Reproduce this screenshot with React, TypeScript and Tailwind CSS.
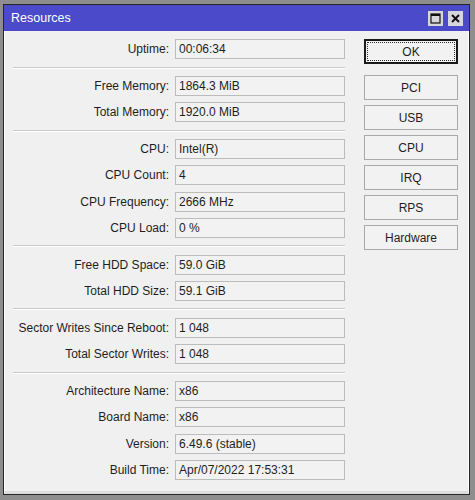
const groups: [string, string][][] = [
  [["Uptime", "00:06:34"]],
  [
    ["Free Memory", "1864.3 MiB"],
    ["Total Memory", "1920.0 MiB"],
  ],
  [
    ["CPU", "Intel(R)"],
    ["CPU Count", "4"],
    ["CPU Frequency", "2666 MHz"],
    ["CPU Load", "0 %"],
  ],
  [
    ["Free HDD Space", "59.0 GiB"],
    ["Total HDD Size", "59.1 GiB"],
  ],
  [
    ["Sector Writes Since Reboot", "1 048"],
    ["Total Sector Writes", "1 048"],
  ],
  [
    ["Architecture Name", "x86"],
    ["Board Name", "x86"],
    ["Version", "6.49.6 (stable)"],
    ["Build Time", "Apr/07/2022 17:53:31"],
  ],
];

const buttons = ["PCI", "USB", "CPU", "IRQ", "RPS", "Hardware"];

function Row({ label, value }: { label: string; value: string }) {
  return (
    <div className="flex items-center h-[26.3px]">
      <div className="w-[156px] text-right whitespace-nowrap">{label}:</div>
      <div className="ml-[6px] w-[170px] h-[20px] border border-[#bcbcbc] bg-[#f2f2f2] px-[3px] flex items-center whitespace-nowrap">
        {value}
      </div>
    </div>
  );
}

export default function App() {
  return (
    <div
      className="w-[475px] h-[500px] bg-[#8e8e8e] pl-[3px] pt-[4px] text-[12px] text-[#1e1e1e]"
      style={{ fontFamily: '"Liberation Sans", Arial, sans-serif' }}
    >
      <div className="w-[467px] h-[491px] border border-[#262626] bg-[#f0f0f0] flex flex-col">
        {/* Title bar */}
        <div className="h-[26px] bg-[#4a4acb] flex items-center pl-[7px] pr-[6px]">
          <span className="text-white text-[12.5px]">Resources</span>
          <div className="ml-auto flex gap-[5px]">
            <div className="w-[15px] h-[15px] bg-[#d6d6dc] flex items-center justify-center">
              <svg width="11" height="11" viewBox="0 0 11 11">
                <rect x="1" y="1" width="9" height="9" fill="none" stroke="#111" strokeWidth="1.2" />
                <rect x="1" y="1" width="9" height="2" fill="#111" />
              </svg>
            </div>
            <div className="w-[15px] h-[15px] bg-[#d6d6dc] flex items-center justify-center">
              <svg width="11" height="11" viewBox="0 0 11 11">
                <path d="M2 2 L9 9 M9 2 L2 9" stroke="#111" strokeWidth="2" />
              </svg>
            </div>
          </div>
        </div>

        {/* Body */}
        <div className="flex-1 flex border-b-[3px] border-[#dcdcdc] border-l border-r border-l-white border-r-white">
          <div className="pl-[8px] pt-[5px]">
            {groups.map((g, i) => (
              <div key={i}>
                {i > 0 && (
                  <div className="h-[10.5px] flex items-center">
                    <div className="w-[332px] border-t border-[#c9c9c9] border-b border-b-white" />
                  </div>
                )}
                {g.map(([l, v]) => (
                  <Row key={l} label={l} value={v} />
                ))}
              </div>
            ))}
          </div>

          <div className="ml-[19px] pt-[8px] flex flex-col gap-[5px]">
            <div className="w-[94px] h-[25px] border-2 border-[#1a1a1a] p-[1px] mb-[6px]">
              <div className="w-full h-full border border-dotted border-[#333] flex items-center justify-center bg-[#f2f2f2]">
                OK
              </div>
            </div>
            {buttons.map((b) => (
              <div
                key={b}
                className="w-[94px] h-[25px] border border-[#a9a9a9] bg-[#f2f2f2] flex items-center justify-center"
              >
                {b}
              </div>
            ))}
          </div>
        </div>
      </div>
    </div>
  );
}
